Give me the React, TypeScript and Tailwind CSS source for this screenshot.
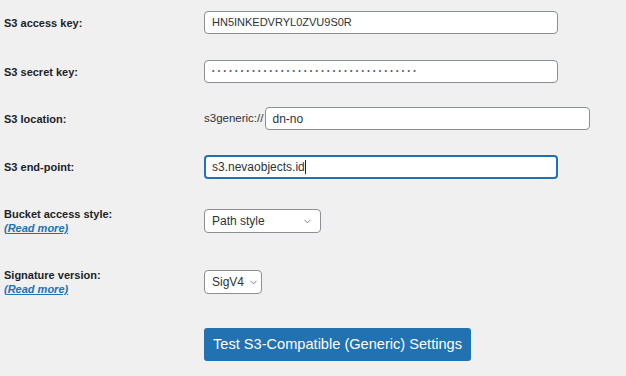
import { ChevronDown } from 'lucide-react'

const font = { fontFamily: '"Liberation Sans", Arial, sans-serif' }

function Label({ text, more }: { text: string; more?: boolean }) {
  return (
    <div className="w-[204px] shrink-0 pl-[4px] text-[11px] font-bold leading-[14px] text-[#1d2327]">
      <div>{text}</div>
      {more && (
        <a href="#" className="italic underline text-[#2271b1]">(Read more)</a>
      )}
    </div>
  )
}

function Select({ value, width }: { value: string; width: string }) {
  return (
    <div className={`flex items-center justify-between gap-[4px] h-[24px] ${width} rounded-[4px] border border-[#8c8f94] bg-white pl-[7px] pr-[7px] text-[12px] text-[#2c3338]`}>
      <span>{value}</span>
      <ChevronDown className="w-[11px] h-[11px] shrink-0 text-[#50575e]" strokeWidth={1.6} />
    </div>
  )
}

export default function App() {
  return (
    <div className="w-[626px] h-[376px] bg-[#f0f0f1] overflow-hidden" style={font}>
      <div className="flex flex-col">
        <div className="flex items-center mt-[11px]">
          <Label text="S3 access key:" />
          <div className="w-[354px] h-[23px] rounded-[4px] border border-[#8c8f94] bg-white px-[7px] flex items-center text-[11px] text-[#2c3338]">
            HN5INKEDVRYL0ZVU9S0R
          </div>
        </div>

        <div className="flex items-center mt-[26px]">
          <Label text="S3 secret key:" />
          <div className="w-[354px] h-[23px] rounded-[4px] border border-[#8c8f94] bg-white px-[7px] flex items-center text-[7px] tracking-[3.3px] text-[#50575e]">
            ••••••••••••••••••••••••••••••••••••
          </div>
        </div>

        <div className="flex items-center mt-[24px]">
          <Label text="S3 location:" />
          <span className="text-[11.5px] text-[#2c3338]">s3generic://</span>
          <div className="ml-[2px] w-[325px] h-[23px] rounded-[4px] border border-[#8c8f94] bg-white px-[6px] flex items-center text-[12px] text-[#2c3338]">
            dn-no
          </div>
        </div>

        <div className="flex items-center mt-[25px]">
          <Label text="S3 end-point:" />
          <div className="w-[354px] h-[24px] rounded-[4px] border-2 border-[#2271b1] bg-white px-[6px] flex items-center text-[12px] text-[#2c3338]">
            s3.nevaobjects.id<span className="w-px h-[14px] bg-[#1d2327]" />
          </div>
        </div>

        <div className="flex items-center h-[28px] mt-[28px]">
          <Label text="Bucket access style:" more />
          <Select value="Path style" width="w-[117px]" />
        </div>

        <div className="flex items-center h-[28px] mt-[33px]">
          <Label text="Signature version:" more />
          <Select value="SigV4" width="w-[58px]" />
        </div>

        <div className="flex mt-[32px] pl-[204px]">
          <button className="h-[33px] px-[9px] rounded-[3px] bg-[#2271b1] text-white text-[14.6px]">
            Test S3-Compatible (Generic) Settings
          </button>
        </div>
      </div>
    </div>
  )
}
